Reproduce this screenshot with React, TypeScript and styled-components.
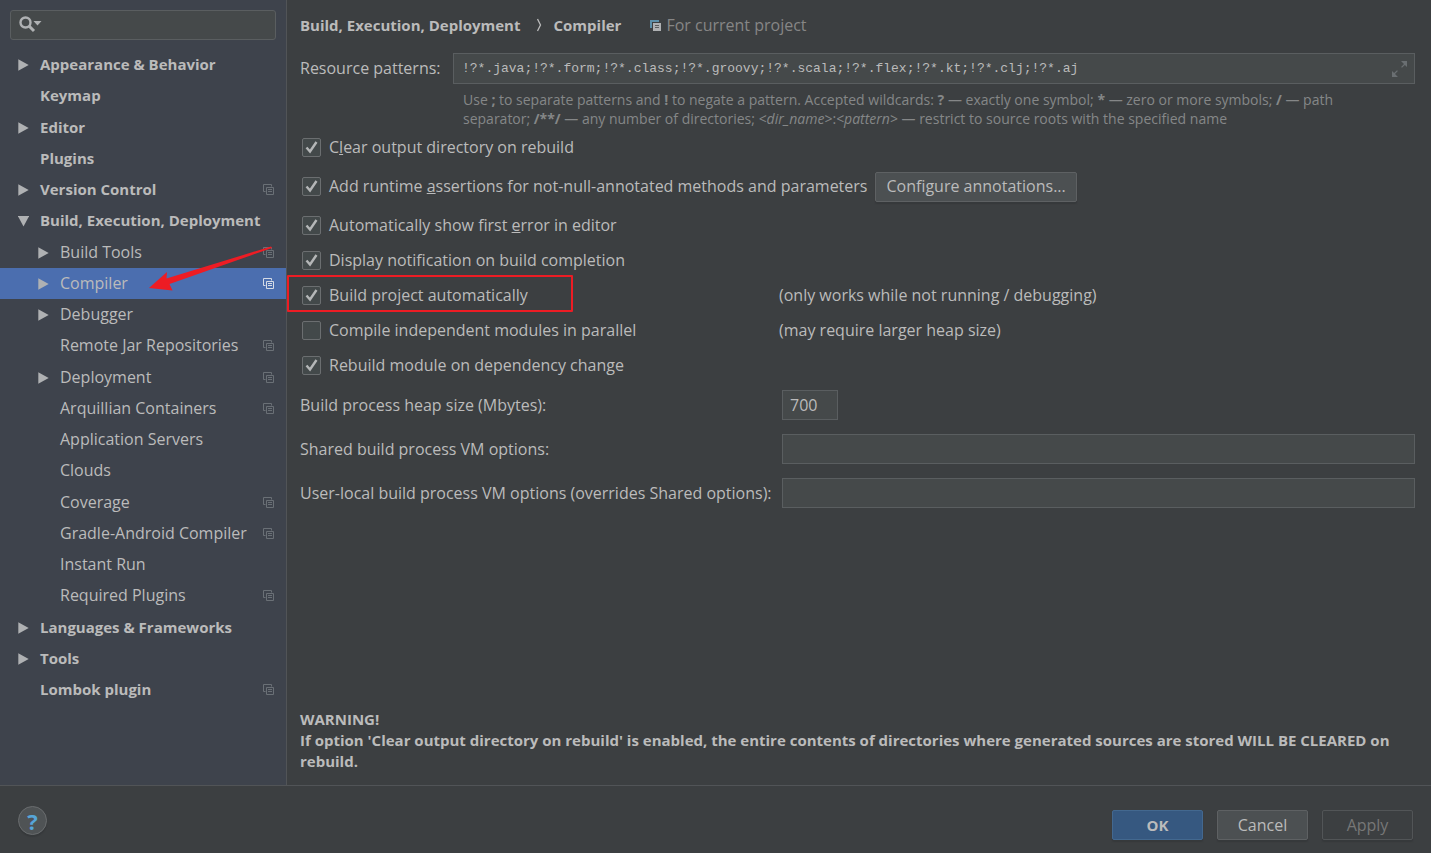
import React from "react";
import styled, { createGlobalStyle, css } from "styled-components";

const GlobalStyle = createGlobalStyle`
  *, *::before, *::after { box-sizing: border-box; }
  body {
    margin: 0;
    background: #3c3f41;
    color: #bbbbbb;
    font: 16px/21px "Open Sans", "Noto Sans", sans-serif;
  }
  button, input { font: inherit; color: inherit; }
  ul { list-style: none; margin: 0; padding: 0; }
`;

const Dialog = styled.div`
  display: flex;
  flex-direction: column;
  min-height: 100vh;
`;

const Body = styled.div`
  display: flex;
  flex: 1;
`;

const boldFace = css`
  font-size: 15px;
  font-weight: 700;
`;

/* ---------- sidebar ---------- */

const Sidebar = styled.nav`
  flex: 0 0 287px;
  min-width: 0;
  padding-top: 10px;
  background: #3e434c;
  border-right: 1px solid #515457;
`;

const SearchBox = styled.label`
  display: flex;
  align-items: center;
  height: 30px;
  margin: 0 10px 9px;
  padding: 0 8px;
  background: #45494a;
  border: 1px solid #5a5e60;
  border-radius: 3px;
`;

const SearchInput = styled.input`
  flex: 1;
  min-width: 0;
  height: 100%;
  padding: 0 6px;
  background: none;
  border: 0;
  outline: none;
`;

const TreeItem = styled.li`
  position: relative;
  &:nth-child(4n + 3) { margin-top: 1px; }
`;

const TreeRow = styled.button<{ $level: number; $selected?: boolean }>`
  display: flex;
  align-items: center;
  gap: 11px;
  width: 100%;
  height: 31px;
  padding: 0 12px 0 ${(p) => 18 + p.$level * 20}px;
  border: 0;
  text-align: left;
  white-space: nowrap;
  ${(p) => p.$level === 0 && boldFace}
  background: ${(p) => (p.$selected ? "#4b6eaf" : "transparent")};
`;

const RowLabel = styled.span`
  flex: 1;
`;

const ArrowNote = styled.svg`
  position: absolute;
  z-index: 1;
  left: 148px;
  bottom: 7px;
`;

/* ---------- main panel ---------- */

const Main = styled.main`
  display: flex;
  flex-direction: column;
  flex: 1;
  min-width: 0;
  padding: 9px 16px 13px 13px;
`;

const Breadcrumb = styled.header`
  display: flex;
  align-items: center;
  height: 32px;
  margin-bottom: 12px;
`;

const Crumb = styled.span`
  ${boldFace}
`;

const CrumbSeparator = styled.svg`
  margin: 0 12px 0 15px;
`;

const Scope = styled.span`
  display: flex;
  align-items: center;
  gap: 5px;
  margin-left: 29px;
  color: #868686;
`;

const PatternGrid = styled.div`
  display: grid;
  grid-template-columns: 153px 1fr;
  align-items: center;
  row-gap: 6px;
`;

const fieldFrame = css`
  background: #45494a;
  border: 1px solid #5a5e60;
`;

const PatternField = styled.div`
  ${fieldFrame}
  display: flex;
  align-items: center;
  height: 31px;
  padding-right: 6px;
`;

const PatternInput = styled.input`
  flex: 1;
  min-width: 0;
  height: 100%;
  padding: 0 8px;
  background: none;
  border: 0;
  outline: none;
  font: 13px/18px "Liberation Mono", monospace;
`;

const IconButton = styled.button`
  display: flex;
  padding: 0;
  border: 0;
  background: none;
`;

const Hint = styled.p`
  grid-column: 2;
  margin: 0;
  padding-left: 10px;
  font-size: 14px;
  line-height: 19px;
  color: #858788;
`;

const Options = styled.div`
  padding-top: 2px;
`;

const OptionRow = styled.div<{ $tall?: boolean }>`
  display: grid;
  grid-template-columns: ${(p) => (p.$tall ? "auto auto 1fr" : "479px 1fr")};
  column-gap: ${(p) => (p.$tall ? "8px" : "0")};
  align-items: center;
  height: ${(p) => (p.$tall ? 43 : 35)}px;
  position: relative;
`;

const CheckLabel = styled.label`
  display: flex;
  align-items: center;
  gap: 8px;
  padding-left: 2px;
`;

const CheckBox = styled.input`
  appearance: none;
  width: 19px;
  height: 19px;
  margin: 0;
  border: 1px solid #6b6e70;
  border-radius: 2px;
  background: #43494a;
`;

const CheckHolder = styled.span`
  display: grid;
  & > * { grid-area: 1 / 1; }
  & > svg { pointer-events: none; }
`;

const Highlight = styled.span`
  position: absolute;
  left: -13px;
  top: -3px;
  width: 286px;
  height: 37px;
  border: 2px solid #ed1c24;
  border-radius: 1px;
  pointer-events: none;
`;

const FieldRow = styled.div`
  display: grid;
  grid-template-columns: 482px 1fr;
  align-items: center;
  height: 44px;
`;

const TextField = styled.input<{ $short?: boolean }>`
  ${fieldFrame}
  width: ${(p) => (p.$short ? "56px" : "100%")};
  height: 30px;
  padding: 0 7px;
  outline: none;
`;

const Warning = styled.p`
  ${boldFace}
  margin: auto 0 0;
`;

/* ---------- footer ---------- */

const Footer = styled.footer`
  display: flex;
  align-items: flex-start;
  gap: 14px;
  padding: 24px 18px 13px;
  border-top: 1px solid #515457;
`;

const Button = styled.button<{ $kind?: "primary" | "disabled" }>`
  min-width: 91px;
  height: 30px;
  padding: 0 10px;
  border: 1px solid #5e6163;
  border-radius: 2px;
  background: #4c5052;
  box-shadow: 0 2px 1px #36393b;
  ${(p) =>
    p.$kind === "primary" &&
    css`
      ${boldFace}
      background: #365880;
      border-color: #43688f;
    `}
  ${(p) =>
    p.$kind === "disabled" &&
    css`
      background: #3c3f41;
      border-color: #525557;
      color: #777777;
    `}
`;

const HelpButton = styled.button`
  ${boldFace}
  width: 29px;
  height: 29px;
  margin: -4px auto 0 0;
  padding: 0;
  border: 1px solid #6a6d6f;
  border-radius: 50%;
  background: #4f5355;
  box-shadow: 0 2px 1px #36393b;
  color: #56a5d8;
  font-size: 22px;
  line-height: 26px;
`;

/* ---------- icons ---------- */

const Expander = ({ state }: { state?: "open" | "closed" }) => (
  <svg width="11" height="12" viewBox="0 0 11 12" aria-hidden="true">
    {state === "closed" && <path d="M0.3 0.3 10.7 6 0.3 11.7z" fill="#afb1b3" />}
    {state === "open" && <path d="M-0.2 1H11.2L5.5 11.4z" fill="#afb1b3" />}
  </svg>
);

const ProjectIcon = ({ color = "#6a7076" }: { color?: string }) => (
  <svg width="11" height="11" viewBox="0 0 11 11" fill="none" stroke={color} aria-hidden="true">
    <path d="M2.5 7.5H.5V.5H8.5V2.5" />
    <path d="M3.5 3.5H10.5V10.5H3.5z" />
    <path d="M5 5.500H9M5 7.500H9" />
  </svg>
);

const ScopeIcon = () => (
  <svg width="11" height="11" viewBox="0 0 11 11" aria-hidden="true">
    <path d="M0 0H9V2H2V8H0z" fill="#5d8fa9" />
    <path d="M3 3H11V11H3z" fill="#afb1b3" />
    <path d="M5 5.500H9M5 7.500H9" stroke="#5a5e60" />
  </svg>
);

const SearchIcon = () => (
  <svg width="24" height="18" viewBox="0 0 24 18" aria-hidden="true">
    <circle cx="6.5" cy="6.5" r="5" fill="none" stroke="#afb1b3" strokeWidth="2.4" />
    <path d="M10 10 15 15" stroke="#afb1b3" strokeWidth="3" />
    <path d="M14.500 5H22.500L18.500 9.5z" fill="#afb1b3" />
  </svg>
);

const ExpandIcon = () => (
  <svg width="16" height="18" viewBox="0 0 16 18" fill="#6a6f72" aria-hidden="true">
    <path d="M9 1H15V7L12.900 4.900 10 7.800 9.100 6.900 12 4z" />
    <path d="M6 17H0V11L2.100 13.100 5 10.200 5.900 11.100 3 14z" />
  </svg>
);

const CheckMark = () => (
  <svg width="19" height="19" viewBox="0 0 19 19" fill="none" stroke="#b4b6b7" strokeWidth="2.4" aria-hidden="true">
    <path d="M4.500 9.500 8 13.500 14.500 4" />
  </svg>
);

/* ---------- data ---------- */

type Node = {
  label: string;
  level: 0 | 1;
  state?: "open" | "closed";
  project?: boolean;
  selected?: boolean;
};

const nodes: Node[] = [
  { label: "Appearance & Behavior", level: 0, state: "closed" },
  { label: "Keymap", level: 0 },
  { label: "Editor", level: 0, state: "closed" },
  { label: "Plugins", level: 0 },
  { label: "Version Control", level: 0, state: "closed", project: true },
  { label: "Build, Execution, Deployment", level: 0, state: "open" },
  { label: "Build Tools", level: 1, state: "closed", project: true },
  { label: "Compiler", level: 1, state: "closed", project: true, selected: true },
  { label: "Debugger", level: 1, state: "closed" },
  { label: "Remote Jar Repositories", level: 1, project: true },
  { label: "Deployment", level: 1, state: "closed", project: true },
  { label: "Arquillian Containers", level: 1, project: true },
  { label: "Application Servers", level: 1 },
  { label: "Clouds", level: 1 },
  { label: "Coverage", level: 1, project: true },
  { label: "Gradle-Android Compiler", level: 1, project: true },
  { label: "Instant Run", level: 1 },
  { label: "Required Plugins", level: 1, project: true },
  { label: "Languages & Frameworks", level: 0, state: "closed" },
  { label: "Tools", level: 0, state: "closed" },
  { label: "Lombok plugin", level: 0, project: true },
];

type Option = {
  text: React.ReactNode;
  checked: boolean;
  note?: string;
  action?: string;
  highlighted?: boolean;
};

const options: Option[] = [
  { text: <>C<u>l</u>ear output directory on rebuild</>, checked: true },
  {
    text: <>Add runtime <u>a</u>ssertions for not-null-annotated methods and parameters</>,
    checked: true,
    action: "Configure annotations...",
  },
  { text: <>Automatically show first <u>e</u>rror in editor</>, checked: true },
  { text: "Display notification on build completion", checked: true },
  {
    text: "Build project automatically",
    checked: true,
    note: "(only works while not running / debugging)",
    highlighted: true,
  },
  { text: "Compile independent modules in parallel", checked: false, note: "(may require larger heap size)" },
  { text: "Rebuild module on dependency change", checked: true },
];

/* ---------- parts ---------- */

const SettingsTree = () => (
  <ul>
    {nodes.map((n) => (
      <TreeItem key={n.label}>
        <TreeRow
          type="button"
          $level={n.level}
          $selected={n.selected}
          aria-expanded={n.state ? n.state === "open" : undefined}
          aria-current={n.selected ? "page" : undefined}
        >
          <Expander state={n.state} />
          <RowLabel>{n.label}</RowLabel>
          {n.project && <ProjectIcon color={n.selected ? "#d5dbe6" : undefined} />}
        </TreeRow>
        {n.selected && (
          <ArrowNote width="124" height="46" viewBox="0 0 124 46" fill="#ed1c24" aria-hidden="true">
            <path d="M1 42 19 26 18.500 32.500 123 .5 124 2 21.500 38 24.500 44.500z" />
          </ArrowNote>
        )}
      </TreeItem>
    ))}
  </ul>
);

const OptionItem = ({ option }: { option: Option }) => {
  const [checked, setChecked] = React.useState(option.checked);
  return (
    <OptionRow $tall={!!option.action}>
      <CheckLabel>
        <CheckHolder>
          <CheckBox type="checkbox" checked={checked} onChange={(e) => setChecked(e.target.checked)} />
          {checked && <CheckMark />}
        </CheckHolder>
        <span>{option.text}</span>
      </CheckLabel>
      {option.action && <Button type="button">{option.action}</Button>}
      {option.note && <span>{option.note}</span>}
      {option.highlighted && <Highlight />}
    </OptionRow>
  );
};

export default function App() {
  return (
    <Dialog>
      <GlobalStyle />
      <Body>
        <Sidebar aria-label="Settings">
          <SearchBox>
            <SearchIcon />
            <SearchInput type="text" aria-label="Search settings" />
          </SearchBox>
          <SettingsTree />
        </Sidebar>
        <Main>
          <Breadcrumb>
            <Crumb>Build, Execution, Deployment</Crumb>
            <CrumbSeparator width="6" height="14" viewBox="0 0 6 14" fill="none" stroke="#bbbbbb" strokeWidth="1.300" aria-hidden="true">
              <path d="M1.500 1 4.500 7 1.500 13" />
            </CrumbSeparator>
            <Crumb>Compiler</Crumb>
            <Scope>
              <ScopeIcon />
              For current project
            </Scope>
          </Breadcrumb>
          <PatternGrid>
            <label htmlFor="patterns">Resource patterns:</label>
            <PatternField>
              <PatternInput
                id="patterns"
                type="text"
                spellCheck={false}
                defaultValue="!?*.java;!?*.form;!?*.class;!?*.groovy;!?*.scala;!?*.flex;!?*.kt;!?*.clj;!?*.aj"
              />
              <IconButton type="button" aria-label="Expand">
                <ExpandIcon />
              </IconButton>
            </PatternField>
            <Hint>
              Use <b>;</b> to separate patterns and <b>!</b> to negate a pattern. Accepted wildcards: <b>?</b> — exactly
              one symbol; <b>*</b> — zero or more symbols; <b>/</b> — path
              <br />
              separator; <b>/**/</b> — any number of directories; <i>&lt;dir_name&gt;</i>:<i>&lt;pattern&gt;</i> —
              restrict to source roots with the specified name
            </Hint>
          </PatternGrid>
          <Options>
            {options.map((o, i) => (
              <OptionItem key={i} option={o} />
            ))}
          </Options>
          <FieldRow>
            <label htmlFor="heap">Build process heap size (Mbytes):</label>
            <TextField id="heap" type="text" defaultValue="700" $short />
          </FieldRow>
          <FieldRow>
            <label htmlFor="shared-vm">Shared build process VM options:</label>
            <TextField id="shared-vm" type="text" />
          </FieldRow>
          <FieldRow>
            <label htmlFor="local-vm">User-local build process VM options (overrides Shared options):</label>
            <TextField id="local-vm" type="text" />
          </FieldRow>
          <Warning>
            WARNING!
            <br />
            If option 'Clear output directory on rebuild' is enabled, the entire contents of directories where generated
            sources are stored WILL BE CLEARED on rebuild.
          </Warning>
        </Main>
      </Body>
      <Footer>
        <HelpButton type="button" aria-label="Help">?</HelpButton>
        <Button type="button" $kind="primary">OK</Button>
        <Button type="button">Cancel</Button>
        <Button type="button" $kind="disabled" disabled>Apply</Button>
      </Footer>
    </Dialog>
  );
}
